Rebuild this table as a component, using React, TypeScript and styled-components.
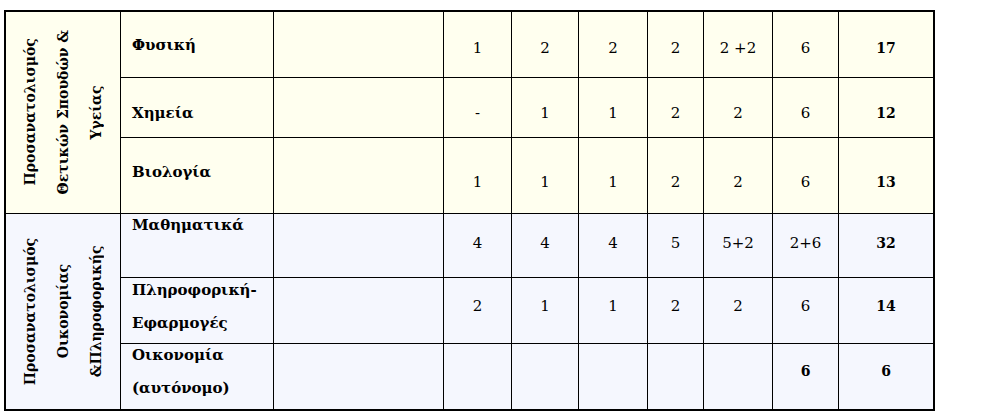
import React from "react";
import styled, { createGlobalStyle } from "styled-components";

const Global = createGlobalStyle`
  html, body { margin: 0; padding: 0; background: #ffffff; }
  body { font-family: "DejaVu Serif", "Liberation Serif", serif; color: #000; }
`;

type Tone = "cream" | "blue";
const toneBg: Record<Tone, string> = { cream: "#FFFFEF", blue: "#F5F7FE" };

const serif = `"DejaVu Serif", "Liberation Serif", serif`;

const Page = styled.div`
  padding: 10px 0 0 4px;
  font-family: ${serif};
`;

const Grid = styled.div`
  display: inline-grid;
  grid-template-columns: 114px 152px 169px 67px 66px 68px 55px 68px 65px 94px;
  grid-template-rows: 65px 59px 75px 63px 65px 65px;
  gap: 1px;
  background: #000;
  border: 2px solid #000;
`;

const Cell = styled.div<{ $tone: Tone }>`
  background: ${(p) => toneBg[p.$tone]};
  box-sizing: border-box;
  font-family: ${serif};
`;

const GroupCell = styled(Cell)`
  grid-row: span 3;
  display: flex;
  align-items: center;
  justify-content: center;
`;

const VerticalText = styled.div`
  writing-mode: vertical-rl;
  transform: rotate(180deg);
  font-weight: bold;
  font-size: 14px;
  line-height: 33px;
  text-align: center;
  white-space: nowrap;
`;

const NameCell = styled(Cell)<{ $top: number }>`
  padding: ${(p) => p.$top}px 0 0 11px;
  display: flex;
  flex-direction: column;
  gap: 13px;
`;

const NameLine = styled.div`
  font-weight: bold;
  font-size: 15px;
  line-height: 20px;
  white-space: nowrap;
`;

const NumCell = styled(Cell)<{ $top: number; $bold?: boolean }>`
  padding-top: ${(p) => p.$top}px;
  text-align: center;
  font-size: ${(p) => (p.$bold ? 14 : 15)}px;
  line-height: 20px;
  font-weight: ${(p) => (p.$bold ? "bold" : "normal")};
`;

type Val = { t: string; b?: boolean };
type Row = {
  name: string[];
  nameTop: number;
  numTop: number;
  vals: Val[];
};

type Group = { tone: Tone; label: string[]; rows: Row[] };

const v = (t: string, b = false): Val => ({ t, b });

const groups: Group[] = [
  {
    tone: "cream",
    label: ["Προσανατολισμός", "Θετικών Σπουδών &", "Υγείας"],
    rows: [
      { name: ["Φυσική"], nameTop: 23, numTop: 26, vals: [v("1"), v("2"), v("2"), v("2"), v("2 +2"), v("6"), v("17", true)] },
      { name: ["Χημεία"], nameTop: 25, numTop: 25, vals: [v("-"), v("1"), v("1"), v("2"), v("2"), v("6"), v("12", true)] },
      { name: ["Βιολογία"], nameTop: 24, numTop: 34, vals: [v("1"), v("1"), v("1"), v("2"), v("2"), v("6"), v("13", true)] },
    ],
  },
  {
    tone: "blue",
    label: ["Προσανατολισμός", "Οικονομίας", "&Πληροφορικής"],
    rows: [
      { name: ["Μαθηματικά"], nameTop: 1, numTop: 19, vals: [v("4"), v("4"), v("4"), v("5"), v("5+2"), v("2+6"), v("32", true)] },
      { name: ["Πληροφορική-", "Εφαρμογές"], nameTop: 2, numTop: 18, vals: [v("2"), v("1"), v("1"), v("2"), v("2"), v("6"), v("14", true)] },
      { name: ["Οικονομία", "(αυτόνομο)"], nameTop: 1, numTop: 17, vals: [v(""), v(""), v(""), v(""), v(""), v("6", true), v("6", true)] },
    ],
  },
];

export default function App() {
  return (
    <Page>
      <Global />
      <Grid>
        {groups.map((g, gi) =>
          g.rows.map((r, ri) => (
            <React.Fragment key={`${gi}-${ri}`}>
              {ri === 0 && (
                <GroupCell $tone={g.tone}>
                  <VerticalText>
                    {g.label.map((l, i) => (
                      <React.Fragment key={i}>
                        {i > 0 && <br />}
                        {l}
                      </React.Fragment>
                    ))}
                  </VerticalText>
                </GroupCell>
              )}
              <NameCell $tone={g.tone} $top={r.nameTop}>
                {r.name.map((n, i) => (
                  <NameLine key={i}>{n}</NameLine>
                ))}
              </NameCell>
              <Cell $tone={g.tone} />
              {r.vals.map((val, vi) => (
                <NumCell key={vi} $tone={g.tone} $top={r.numTop} $bold={val.b}>
                  {val.t}
                </NumCell>
              ))}
            </React.Fragment>
          ))
        )}
      </Grid>
    </Page>
  );
}
